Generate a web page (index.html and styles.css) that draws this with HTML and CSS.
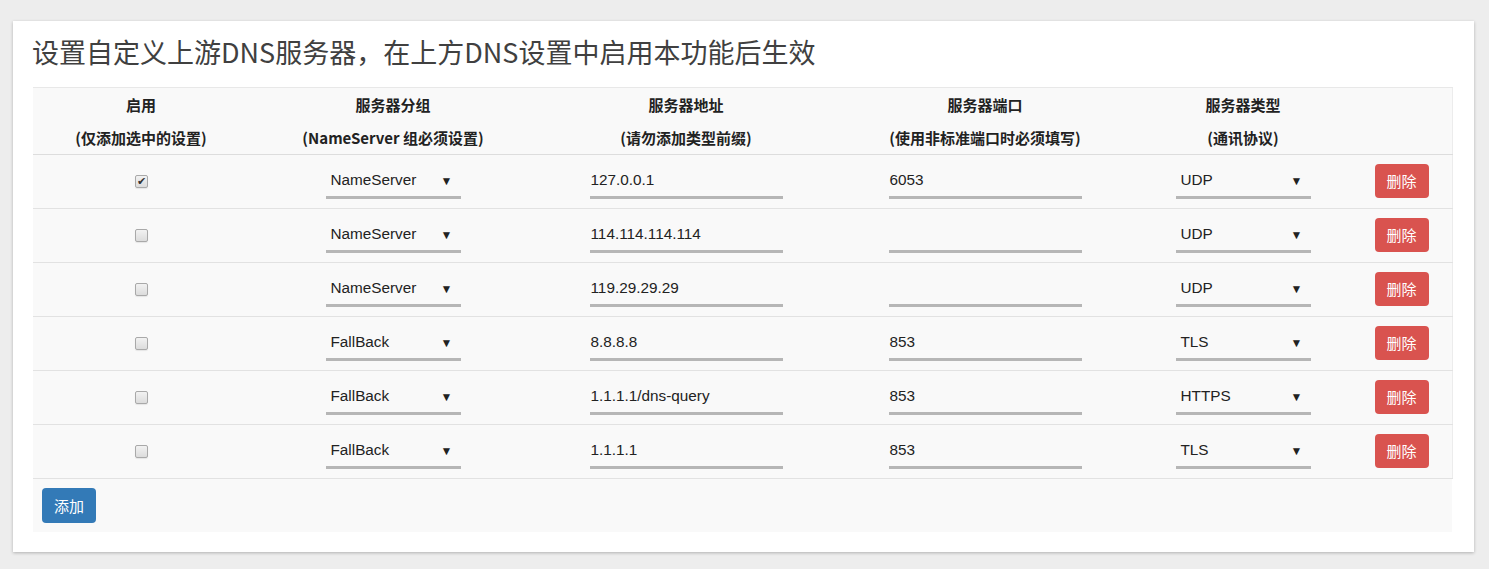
FILE: index.html
```html
<!DOCTYPE html>
<html lang="zh-CN">
<head>
<meta charset="utf-8">
<title>DNS</title>
<link rel="stylesheet" href="styles.css">
</head>
<body>
<div class="card">
  <h2 class="title">设置自定义上游DNS服务器，在上方DNS设置中启用本功能后生效</h2>
  <table class="grid">
    <thead>
      <tr>
        <th class="c1"><div>启用</div><div>(仅添加选中的设置)</div></th>
        <th class="c2"><div>服务器分组</div><div>(NameServer 组必须设置)</div></th>
        <th class="c3"><div>服务器地址</div><div>(请勿添加类型前缀)</div></th>
        <th class="c4"><div>服务器端口</div><div>(使用非标准端口时必须填写)</div></th>
        <th class="c5"><div>服务器类型</div><div>(通讯协议)</div></th>
        <th class="c6"></th>
      </tr>
    </thead>
    <tbody>
      <tr>
        <td><span class="cb checked">✔</span></td>
        <td><span class="sel"><span>NameServer</span><span class="arrow">▼</span></span></td>
        <td><span class="inp">127.0.0.1</span></td>
        <td><span class="inp">6053</span></td>
        <td><span class="sel"><span>UDP</span><span class="arrow">▼</span></span></td>
        <td><button class="btn del">删除</button></td>
      </tr>
      <tr>
        <td><span class="cb"></span></td>
        <td><span class="sel"><span>NameServer</span><span class="arrow">▼</span></span></td>
        <td><span class="inp">114.114.114.114</span></td>
        <td><span class="inp"></span></td>
        <td><span class="sel"><span>UDP</span><span class="arrow">▼</span></span></td>
        <td><button class="btn del">删除</button></td>
      </tr>
      <tr>
        <td><span class="cb"></span></td>
        <td><span class="sel"><span>NameServer</span><span class="arrow">▼</span></span></td>
        <td><span class="inp">119.29.29.29</span></td>
        <td><span class="inp"></span></td>
        <td><span class="sel"><span>UDP</span><span class="arrow">▼</span></span></td>
        <td><button class="btn del">删除</button></td>
      </tr>
      <tr>
        <td><span class="cb"></span></td>
        <td><span class="sel"><span>FallBack</span><span class="arrow">▼</span></span></td>
        <td><span class="inp">8.8.8.8</span></td>
        <td><span class="inp">853</span></td>
        <td><span class="sel"><span>TLS</span><span class="arrow">▼</span></span></td>
        <td><button class="btn del">删除</button></td>
      </tr>
      <tr>
        <td><span class="cb"></span></td>
        <td><span class="sel"><span>FallBack</span><span class="arrow">▼</span></span></td>
        <td><span class="inp">1.1.1.1/dns-query</span></td>
        <td><span class="inp">853</span></td>
        <td><span class="sel"><span>HTTPS</span><span class="arrow">▼</span></span></td>
        <td><button class="btn del">删除</button></td>
      </tr>
      <tr>
        <td><span class="cb"></span></td>
        <td><span class="sel"><span>FallBack</span><span class="arrow">▼</span></span></td>
        <td><span class="inp">1.1.1.1</span></td>
        <td><span class="inp">853</span></td>
        <td><span class="sel"><span>TLS</span><span class="arrow">▼</span></span></td>
        <td><button class="btn del">删除</button></td>
      </tr>
    </tbody>
  </table>
  <div class="foot">
    <button class="btn add">添加</button>
  </div>
</div>
</body>
</html>
```

FILE: styles.css
```css
html, body {
  margin: 0;
  padding: 0;
  background: #ededed;
}
body {
  padding: 21px 15px 18px 13px;
  font-family: "Liberation Sans", Arial, "Noto Sans CJK SC", sans-serif;
  color: #333;
}
.card {
  background: #fff;
  box-shadow: 0 1px 3px rgba(0,0,0,0.25);
  padding: 12px 21px 20px 20px;
}
.title {
  margin: 0 0 16px -1px;
  font-family: "Noto Sans CJK SC", sans-serif;
  font-weight: 400;
  font-size: 27px;
  line-height: 38px;
  color: #404040;
}
.grid {
  width: 100%;
  border-collapse: collapse;
  table-layout: fixed;
  background: #f9f9f9;
  border-right: 1px solid #ececec;
}
.grid th {
  font-family: "Noto Sans CJK SC", sans-serif;
  font-weight: 700;
  font-size: 15px;
  line-height: 33px;
  color: #222;
  text-align: center;
  padding: 0;
  border-top: 1px solid #e8e8e8;
  border-bottom: 1px solid #ddd;
}
.c1 { width: 216px; }
.c2 { width: 288px; }
.c3 { width: 298px; }
.c4 { width: 300px; }
.c5 { width: 216px; }
.grid td {
  height: 53px;
  padding: 0;
  text-align: center;
  vertical-align: middle;
  border-bottom: 1px solid #e2e2e2;
  font-size: 15px;
}
.cb {
  display: inline-block;
  width: 11px;
  height: 11px;
  border: 1px solid #a9a9a9;
  border-radius: 2px;
  background: linear-gradient(#f2f2f2, #dcdcdc);
  font-size: 11px;
  line-height: 11px;
  color: #333;
  vertical-align: middle;
  text-align: center;
  box-shadow: 0 1px 1px rgba(0,0,0,0.08);
  position: relative;
  top: -2px;
}
.sel {
  display: inline-flex;
  justify-content: space-between;
  align-items: center;
  box-sizing: border-box;
  width: 135px;
  height: 34px;
  padding: 0 8px 0 5px;
  border-bottom: 3px solid #b6b6b6;
  text-align: left;
  color: #222;
  font-size: 15.3px;
  vertical-align: middle;
}
.sel .arrow {
  font-size: 12px;
  color: #222;
  position: relative;
  top: 1px;
}
.inp {
  display: inline-block;
  box-sizing: border-box;
  width: 193px;
  height: 34px;
  line-height: 29px;
  padding-left: 1px;
  border-bottom: 3px solid #b6b6b6;
  text-align: left;
  color: #222;
  font-size: 15.3px;
  vertical-align: middle;
}
.btn {
  border: 0;
  border-radius: 4px;
  color: #fff;
  font-family: "Noto Sans CJK SC", sans-serif;
  font-size: 15px;
  width: 54px;
  height: 34px;
  padding: 0;
  cursor: pointer;
  vertical-align: middle;
}
.del {
  background: #d9534f;
  position: relative;
  top: -1px;
}
.add {
  background: #337ab7;
  height: 35px;
}
.foot {
  background: #f9f9f9;
  padding: 9px 9px 9px 9px;
  margin-right: 1px;
}
```
